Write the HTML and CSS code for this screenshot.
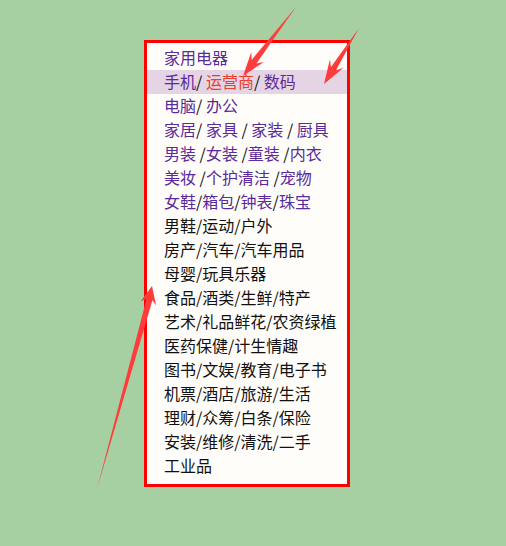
FILE: index.html
```html
<!DOCTYPE html>
<html lang="zh-CN">
<head>
<meta charset="utf-8">
<title>分类</title>
<link rel="stylesheet" href="styles.css">
</head>
<body>
<div class="menu">
  <div class="row"><a class="v">家用电器</a></div>
  <div class="row hl"><a class="v">手机</a>/ <a class="hot">运营商</a>/ <a class="v">数码</a></div>
  <div class="row"><a class="v">电脑</a>/ <a class="v">办公</a></div>
  <div class="row"><a class="v">家居</a>/ <a class="v">家具</a> / <a class="v">家装</a> / <a class="v">厨具</a></div>
  <div class="row"><a class="v">男装</a> /<a class="v">女装</a> /<a class="v">童装</a> /<a class="v">内衣</a></div>
  <div class="row"><a class="v">美妆</a> /<a class="v">个护清洁</a> /<a class="v">宠物</a></div>
  <div class="row"><a class="v">女鞋</a>/<a class="v">箱包</a>/<a class="v">钟表</a>/<a class="v">珠宝</a></div>
  <div class="row">男鞋/运动/户外</div>
  <div class="row">房产/汽车/汽车用品</div>
  <div class="row">母婴/玩具乐器</div>
  <div class="row">食品/酒类/生鲜/特产</div>
  <div class="row">艺术/礼品鲜花/农资绿植</div>
  <div class="row">医药保健/计生情趣</div>
  <div class="row">图书/文娱/教育/电子书</div>
  <div class="row">机票/酒店/旅游/生活</div>
  <div class="row">理财/众筹/白条/保险</div>
  <div class="row">安装/维修/清洗/二手</div>
  <div class="row">工业品</div>
</div>
<svg class="arrows" width="506" height="546" viewBox="0 0 506 546">
  <polygon points="296,7 256.4,63.5 263.9,61.9 243,76 251.3,52.1 251.6,59.9"/>
  <polygon points="359,28 336,70.3 343.5,67.8 324,84 329.9,59.4 331,67.1"/>
  <polygon points="97,489 152.4,300.3 156.1,305.5 152,286 140.7,301.3 146.6,298.7"/>
</svg>
</body>
</html>
```
FILE: styles.css
```css
html, body {
  margin: 0;
  padding: 0;
}
body {
  background: #a6cfa2;
  width: 506px;
  height: 546px;
  padding: 40px 0 0 144px;
  box-sizing: border-box;
  font-family: "Noto Sans CJK SC", "Noto Sans", sans-serif;
  font-size: 16px;
  color: #111;
  position: relative;
  overflow: hidden;
}
.menu {
  width: 200px;
  border: 3px solid #ff0000;
  background: #fffdf9;
  padding: 3px 0 6px 0;
}
.row {
  height: 24px;
  line-height: 22px;
  padding-left: 17px;
  white-space: nowrap;
}
.row.hl {
  background: #e4d4e4;
}
.v {
  color: #5a2a9a;
}
.hot {
  color: #e8402e;
}
.arrows {
  position: absolute;
  left: 0;
  top: 0;
  pointer-events: none;
}
.arrows polygon {
  fill: #ff3c3c;
}
```
